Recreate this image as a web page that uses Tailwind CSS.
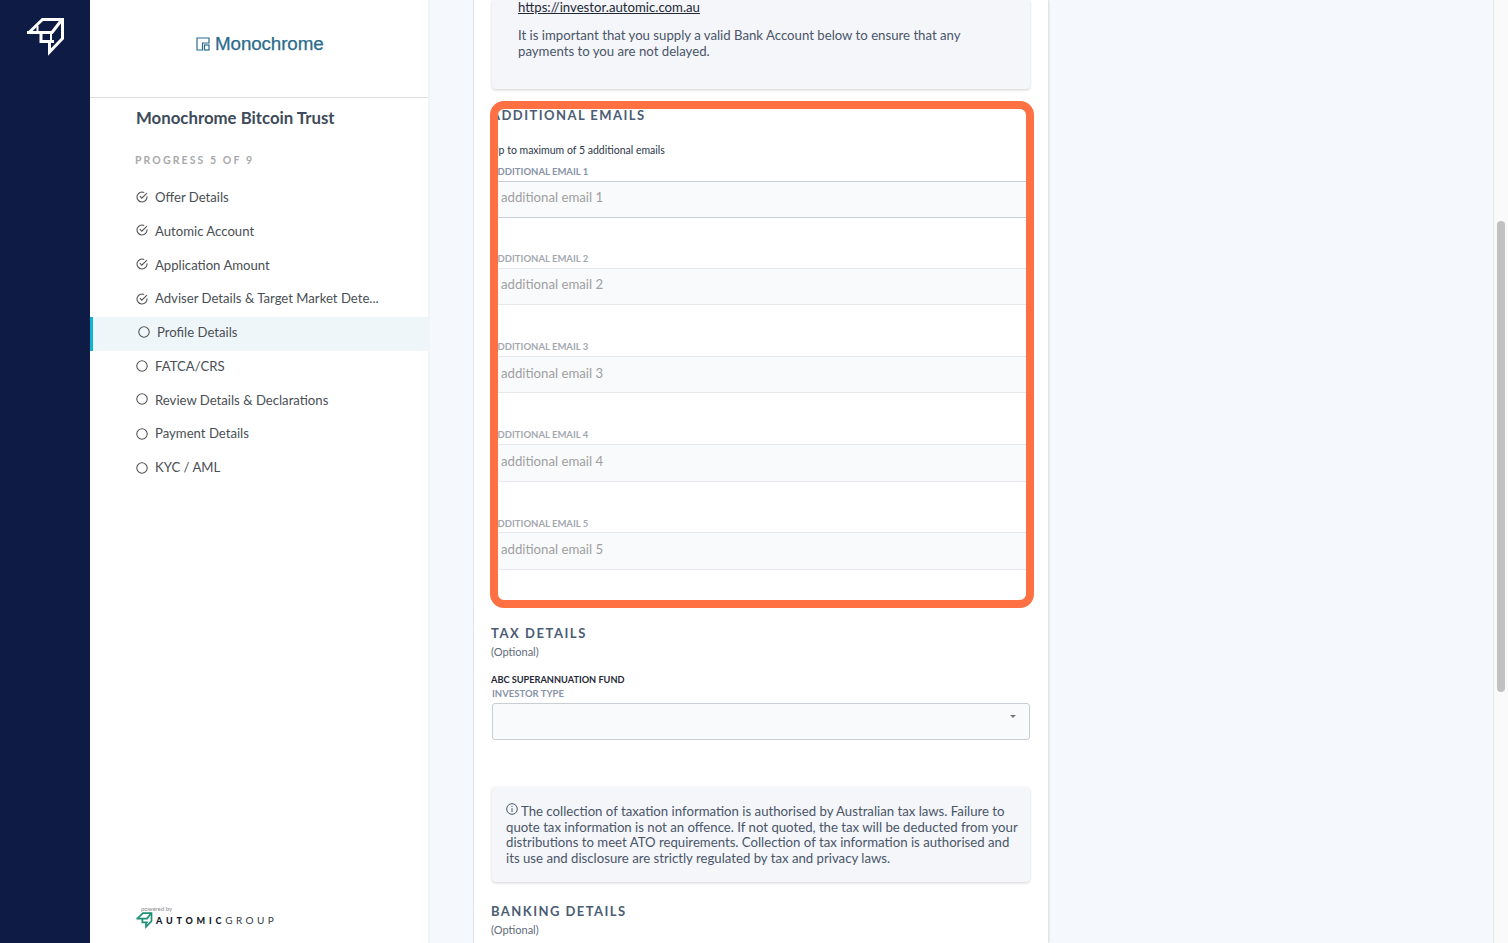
<!DOCTYPE html>
<html lang="en">
<head>
    <meta charset="UTF-8">
    <title>Profile Details</title>
    <script src="https://cdn.jsdelivr.net/npm/@tailwindcss/browser@4"></script>
</head>
<body class="font-[family-name:Lato] bg-[#f5f8fc]">
<div class="relative flex h-[943px] w-[1508px] overflow-hidden">

    <!-- Rail -->
    <div class="w-[90px] shrink-0 bg-[#0e1b45] pt-[17px] pl-[26px]">
        <svg class="w-[40px] h-[40px]" viewBox="26 17 40 40" fill="none" stroke="#fff" stroke-width="3">
            <path d="M29 32.5 L42.5 19.5 H62.5 V38.5 L49.5 52 V43" />
            <path d="M27 32.5 H52 L62 19.5" />
            <path d="M41 33 V41.5 H54" />
            <path d="M37.5 26 V32 M51 33 V41" stroke-width="2" />
        </svg>
    </div>

    <!-- Sidebar -->
    <div class="w-[338px] shrink-0 bg-white flex flex-col shadow-[1px_0_2px_rgba(0,0,0,0.04)]">
        <div class="h-[98px] shrink-0 border-b border-[#dcdee0] flex items-start pt-[35px] pl-[106px] gap-[5px]">
            <svg class="w-[14px] h-[14px] mt-[2px]" viewBox="0 0 14 14" fill="none" stroke="#2a6b8c" stroke-width="1.2">
                <path d="M1 13 V1 H13 V6 H6.5 V13 Z" />
                <rect x="8.5" y="8" width="4.5" height="5" />
            </svg>
            <span class="font-[family-name:'Liberation_Sans'] text-[18.8px] leading-[18px] text-[#2a6b8c] tracking-[-0.1px] [-webkit-text-stroke:0.25px_#2a6b8c]">Monochrome</span>
        </div>
        <div class="pl-[46px] pt-[10px] text-[16.8px] leading-[20px] font-bold text-[#3d4b5a]">Monochrome Bitcoin Trust</div>
        <div class="pl-[45px] pt-[25px] text-[10.5px] leading-[14px] font-bold tracking-[0.2em] text-[#a9a9a9]">PROGRESS 5 OF 9</div>

        <div class="mt-[15px] text-[13.15px] text-[#4a4f55]">
            <div class="flex items-center h-[33.75px] pb-[2px] pl-[46px] gap-[7px]">
                <svg class="w-[12px] h-[12px] -mt-[1px]" viewBox="0 0 12 12" fill="none" stroke="#555" stroke-width="1.1"><path d="M11 5.4 A5 5 0 1 1 8.2 1.5" /><path d="M3.8 5.2 L5.8 7.2 L11 2.2" /></svg>
                <span>Offer Details</span>
            </div>
            <div class="flex items-center h-[33.75px] pb-[2px] pl-[46px] gap-[7px]">
                <svg class="w-[12px] h-[12px] -mt-[3px]" viewBox="0 0 12 12" fill="none" stroke="#555" stroke-width="1.1"><path d="M11 5.4 A5 5 0 1 1 8.2 1.5" /><path d="M3.8 5.2 L5.8 7.2 L11 2.2" /></svg>
                <span>Automic Account</span>
            </div>
            <div class="flex items-center h-[33.75px] pb-[2px] pl-[46px] gap-[7px]">
                <svg class="w-[12px] h-[12px] -mt-[3px]" viewBox="0 0 12 12" fill="none" stroke="#555" stroke-width="1.1"><path d="M11 5.4 A5 5 0 1 1 8.2 1.5" /><path d="M3.8 5.2 L5.8 7.2 L11 2.2" /></svg>
                <span>Application Amount</span>
            </div>
            <div class="flex items-center h-[33.75px] pb-[2px] pl-[46px] gap-[7px]">
                <svg class="w-[12px] h-[12px]" viewBox="0 0 12 12" fill="none" stroke="#555" stroke-width="1.1"><path d="M11 5.4 A5 5 0 1 1 8.2 1.5" /><path d="M3.8 5.2 L5.8 7.2 L11 2.2" /></svg>
                <span>Adviser Details &amp; Target Market Dete...</span>
            </div>
            <div class="flex items-center h-[33.75px] pb-[2px] pl-[45px] gap-[7px] bg-[#eff6f9] border-l-[3px] border-[#0db4d4]">
                <svg class="w-[12px] h-[12px] -mt-[1px]" viewBox="0 0 12 12" fill="none" stroke="#555" stroke-width="1.1"><circle cx="6" cy="6" r="5.2" /></svg>
                <span>Profile Details</span>
            </div>
            <div class="flex items-center h-[33.75px] pb-[2px] pl-[46px] gap-[7px]">
                <svg class="w-[12px] h-[12px] -mt-[2px]" viewBox="0 0 12 12" fill="none" stroke="#555" stroke-width="1.1"><circle cx="6" cy="6" r="5.2" /></svg>
                <span>FATCA/CRS</span>
            </div>
            <div class="flex items-center h-[33.75px] pb-[2px] pl-[46px] gap-[7px]">
                <svg class="w-[12px] h-[12px] -mt-[2px]" viewBox="0 0 12 12" fill="none" stroke="#555" stroke-width="1.1"><circle cx="6" cy="6" r="5.2" /></svg>
                <span>Review Details &amp; Declarations</span>
            </div>
            <div class="flex items-center h-[33.75px] pb-[2px] pl-[46px] gap-[7px]">
                <svg class="w-[12px] h-[12px]" viewBox="0 0 12 12" fill="none" stroke="#555" stroke-width="1.1"><circle cx="6" cy="6" r="5.2" /></svg>
                <span>Payment Details</span>
            </div>
            <div class="flex items-center h-[33.75px] pb-[2px] pl-[46px] gap-[7px]">
                <svg class="w-[12px] h-[12px]" viewBox="0 0 12 12" fill="none" stroke="#555" stroke-width="1.1"><circle cx="6" cy="6" r="5.2" /></svg>
                <span>KYC / AML</span>
            </div>
        </div>

        <!-- Powered by -->
        <div class="mt-auto pl-[46px] pb-[14px]">
            <div class="pl-[5px] text-[6px] leading-[6px] text-[#8a8a8a]">powered by</div>
            <div class="flex items-center">
                <svg class="w-[17px] h-[17px]" viewBox="26 17 40 40" fill="none" stroke="#1f8f76" stroke-width="4">
                    <path d="M29 32.5 L42.5 19.5 H62.5 V38.5 L49.5 52 V43" />
                    <path d="M27 32.5 H52 L62 19.5" />
                    <path d="M41 33 V41.5 H54" />
                </svg>
                <span class="ml-[3px] text-[9px] font-black tracking-[3.8px] text-[#111827]">AUTOMIC</span>
                <span class="text-[10px] tracking-[3.4px] text-[#333a45]">GROUP</span>
            </div>
        </div>
    </div>

    <!-- Main -->
    <div class="flex-1 pl-[45px]">
        <div class="w-[575px] h-[943px] bg-white border-l border-[#e2e6ec] shadow-[1px_0_2px_rgba(0,0,0,0.12)] pl-[18px] pr-[18px]">

            <!-- Notice -->
            <div class="flow-root h-[89px] bg-[#f4f6fa] rounded-b shadow-[0_1px_3px_rgba(0,0,0,0.18)] pl-[26px] text-[13.2px] leading-[16px] text-[#4a5568]">
                <div class="-mt-[1px] underline text-[#1f2937]">https://investor.automic.com.au</div>
                <p class="mt-[12px]">It is important that you supply a valid Bank Account below to ensure that any<br>payments to you are not delayed.</p>
            </div>

            <!-- Additional emails -->
            <div class="pt-[18px] -ml-[1px] text-[13px] leading-[16px] font-bold tracking-[1.45px] text-[#4a5d75]">ADDITIONAL EMAILS</div>
            <div class="mt-[20px] -ml-[1px] text-[10.5px] leading-[14px] text-[#2d3748]">Up to maximum of 5 additional emails</div>
            <div class="mt-[10px] -ml-[1px]">
                <div class="h-[88px]">
                    <div class="h-[11px] text-[9.5px] leading-[10px] font-bold text-[#8793a8]">ADDITIONAL EMAIL 1</div>
                    <div class="mt-[3px] h-[37px] flex items-center pl-[10px] pb-[4px] bg-[#f9fafb] border-y border-[#c9ced4] text-[13.2px] text-[#a0a0a0]">additional email 1</div>
                </div>
                <div class="h-[88px]">
                    <div class="h-[11px] text-[9.5px] leading-[8px] font-bold text-[#a3a8b0]">ADDITIONAL EMAIL 2</div>
                    <div class="mt-[2px] h-[37px] flex items-center pl-[10px] pb-[4px] bg-[#f9fafb] border-y border-[#e6e8eb] text-[13.2px] text-[#a0a0a0]">additional email 2</div>
                </div>
                <div class="h-[88px]">
                    <div class="h-[11px] text-[9.5px] leading-[8px] font-bold text-[#a3a8b0]">ADDITIONAL EMAIL 3</div>
                    <div class="mt-[2px] h-[37px] flex items-center pl-[10px] pb-[2px] bg-[#f9fafb] border-y border-[#e6e8eb] text-[13.2px] text-[#a0a0a0]">additional email 3</div>
                </div>
                <div class="h-[88px]">
                    <div class="h-[11px] text-[9.5px] leading-[8px] font-bold text-[#a3a8b0]">ADDITIONAL EMAIL 4</div>
                    <div class="mt-[2px] h-[38px] flex items-center pl-[10px] pb-[3px] bg-[#f9fafb] border-y border-[#e6e8eb] text-[13.2px] text-[#a0a0a0]">additional email 4</div>
                </div>
                <div class="h-[88px]">
                    <div class="h-[11px] text-[9.5px] leading-[10px] font-bold text-[#a3a8b0]">ADDITIONAL EMAIL 5</div>
                    <div class="mt-[2px] h-[38px] flex items-center pl-[10px] pb-[3px] bg-[#f9fafb] border-y border-[#e6e8eb] text-[13.2px] text-[#a0a0a0]">additional email 5</div>
                </div>
            </div>

            <!-- Tax details -->
            <div class="mt-[18px] -ml-[1px] text-[13px] leading-[16px] font-bold tracking-[1.55px] text-[#4a5d75]">TAX DETAILS</div>
            <div class="mt-[4px] -ml-[1px] text-[11px] leading-[14px] text-[#5f6b7a]">(Optional)</div>
            <div class="mt-[15px] -ml-[1px] text-[9.2px] leading-[12px] font-bold text-[#1f2937]">ABC SUPERANNUATION FUND</div>
            <div class="mt-[2px] text-[9.5px] leading-[12px] font-bold text-[#8793a8]">INVESTOR TYPE</div>
            <div class="relative mt-[3px] h-[37px] bg-[#f9fafb] border border-[#c9ced4] rounded-[3px]">
                <div class="absolute right-[13px] top-[11px] w-0 h-0 border-x-[3px] border-x-transparent border-t-[3px] border-t-[#777]"></div>
            </div>

            <!-- Tax notice -->
            <div class="mt-[47px] h-[95px] bg-[#f4f6fa] rounded shadow-[0_1px_3px_rgba(0,0,0,0.18)] pl-[14px] pt-[16px] text-[13.2px] leading-[15.7px] text-[#4a5568]">
                <svg class="inline-block w-[12px] h-[12px] align-[1px] mr-[3px]" viewBox="0 0 12 12" fill="none" stroke="#4a5568" stroke-width="1"><circle cx="6" cy="6" r="5.3" /><path d="M6 5.2 V9 M6 3 V4" /></svg>The collection of taxation information is authorised by Australian tax laws. Failure to<br>quote tax information is not an offence. If not quoted, the tax will be deducted from your<br>distributions to meet ATO requirements. Collection of tax information is authorised and<br>its use and disclosure are strictly regulated by tax and privacy laws.
            </div>

            <!-- Banking details -->
            <div class="mt-[21px] -ml-[1px] text-[13px] leading-[16px] font-bold tracking-[1.45px] text-[#4a5d75]">BANKING DETAILS</div>
            <div class="mt-[4px] -ml-[1px] text-[11px] leading-[14px] text-[#5f6b7a]">(Optional)</div>
        </div>
    </div>

    <!-- Scrollbar -->
    <div class="w-[15px] shrink-0 bg-[#fafafa] border-l border-[#e8e8e8] pl-[3px] pt-[221px]">
        <div class="w-[8px] h-[471px] rounded-full bg-[#c1c1c1]"></div>
    </div>

    <!-- Highlight frame over the emails section -->
    <div class="absolute left-[490px] top-[101px] w-[544px] h-[507px] border-[8px] border-[#ff7043] rounded-[14px]"></div>
</div>
</body>
</html>
